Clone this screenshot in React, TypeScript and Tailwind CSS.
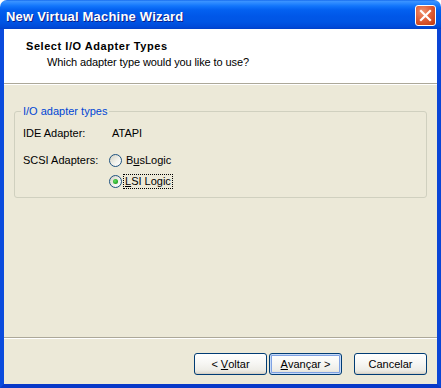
import React from "react";

function Radio({ checked }: { checked?: boolean }) {
  return (
    <span className="w-[13px] h-[13px] rounded-full border border-[#1C5180] bg-[linear-gradient(135deg,#D5D2C3_0%,#F3F3EE_60%,#FFFFFF_100%)] flex items-center justify-center shrink-0">
      {checked && (
        <span className="w-[5px] h-[5px] rounded-full bg-[radial-gradient(circle_at_40%_40%,#62E062_0%,#2AAA2A_60%,#1A8F1A_100%)]" />
      )}
    </span>
  );
}

function XPButton({
  children,
  isDefault,
}: {
  children: React.ReactNode;
  isDefault?: boolean;
}) {
  return (
    <div
      className={
        "w-[73px] h-[22px] rounded-[3px] border border-[#003C74] bg-[linear-gradient(to_bottom,#FFFFFF_0%,#F7F7F4_45%,#EEEDE7_80%,#DCD7CB_100%)] flex items-center justify-center text-[11px] leading-[13px] text-black " +
        (isDefault
          ? "shadow-[inset_0_0_0_1px_#C6DAF7,inset_0_0_0_2px_#7FA2E3]"
          : "shadow-[inset_0_-1px_0_#D6D0C5]")
      }
    >
      {children}
    </div>
  );
}

export default function App() {
  return (
    <div className="w-[441px] h-[388px] flex flex-col bg-white font-['Liberation_Sans',Arial,sans-serif] text-[11px] leading-[13px] text-black select-none">
      {/* Title bar */}
      <div className="h-[29px] shrink-0 rounded-t-[7px] flex items-start bg-[linear-gradient(to_bottom,#0A5DE8_0px,#3D95FF_1px,#2C8AFF_3px,#1275FB_6px,#0360F0_10px,#0057E8_16px,#0055E4_22px,#0049D8_27px,#0040C8_29px)]">
        <div className="ml-[6px] mt-[9px] text-[13px] leading-[15px] font-bold tracking-[0.2px] text-white [text-shadow:1px_1px_0_#0C1E8A]">
          New Virtual Machine Wizard
        </div>
        <div className="ml-auto mr-[5px] mt-[5px] w-[21px] h-[21px] rounded-[3px] border border-white bg-[radial-gradient(circle_at_35%_30%,#F09470_0%,#E0603A_45%,#CD451C_80%,#B83812_100%)] flex items-center justify-center">
          <svg width="19" height="19" viewBox="0 0 19 19">
            <path d="M5 5 L14 14 M14 5 L5 14" stroke="#FFFFFF" strokeWidth="2.2" strokeLinecap="square" />
          </svg>
        </div>
      </div>

      {/* Client area with frame */}
      <div className="flex-1 flex flex-col border-l-4 border-r-4 border-b-4 border-l-[#0A4BDD] border-r-[#0A45D6] border-b-[#0838C8] bg-[#ECE9D8]">
        {/* Header */}
        <div className="h-[54px] shrink-0 bg-white pt-[11px] pl-[22px]">
          <div className="font-bold tracking-[0.55px]">Select I/O Adapter Types</div>
          <div className="mt-[3px] pl-[21px] tracking-[-0.1px]">Which adapter type would you like to use?</div>
        </div>
        <div className="h-px bg-[#ACA899]" />
        <div className="h-px bg-white" />

        {/* Group box */}
        <fieldset className="mt-[20px] mx-[10px] border border-[#D0D0BF] rounded-[3px] pl-[8px] pt-[9px] pb-[8px]">
          <legend className="-ml-[2px] px-[2px] text-[#0046D5] leading-[13px]">I/O adapter types</legend>
          <div className="flex h-[13px]">
            <div className="w-[86px]">IDE Adapter:</div>
            <div className="pl-[3px]">ATAPI</div>
          </div>
          <div className="flex mt-[13px]">
            <div className="w-[86px] pt-[1px]">SCSI Adapters:</div>
            <div className="flex flex-col gap-[6px]">
              <div className="flex items-center h-[15px]">
                <Radio />
                <span className="ml-[1px] px-[2px] border border-transparent">
                  B<span className="underline underline-offset-[1px]">u</span>sLogic
                </span>
              </div>
              <div className="flex items-center h-[15px]">
                <Radio checked />
                <span className="ml-[1px] px-[1px] border border-dotted border-black">
                  <span className="underline underline-offset-[1px]">L</span>SI Logic
                </span>
              </div>
            </div>
          </div>
        </fieldset>

        <div className="flex-1" />

        {/* Separator */}
        <div className="h-px bg-[#ACA899]" />
        <div className="h-px bg-white" />

        {/* Buttons */}
        <div className="flex justify-end pr-[10px] mt-[14px] mb-[9px]">
          <XPButton>
            &lt; <span className="underline underline-offset-[1px] ml-[3px]">V</span>oltar
          </XPButton>
          <div className="ml-[2px]">
            <XPButton isDefault>
              <span className="underline underline-offset-[1px]">A</span>vançar &gt;
            </XPButton>
          </div>
          <div className="ml-[12px]">
            <XPButton>Cancelar</XPButton>
          </div>
        </div>
      </div>
    </div>
  );
}
